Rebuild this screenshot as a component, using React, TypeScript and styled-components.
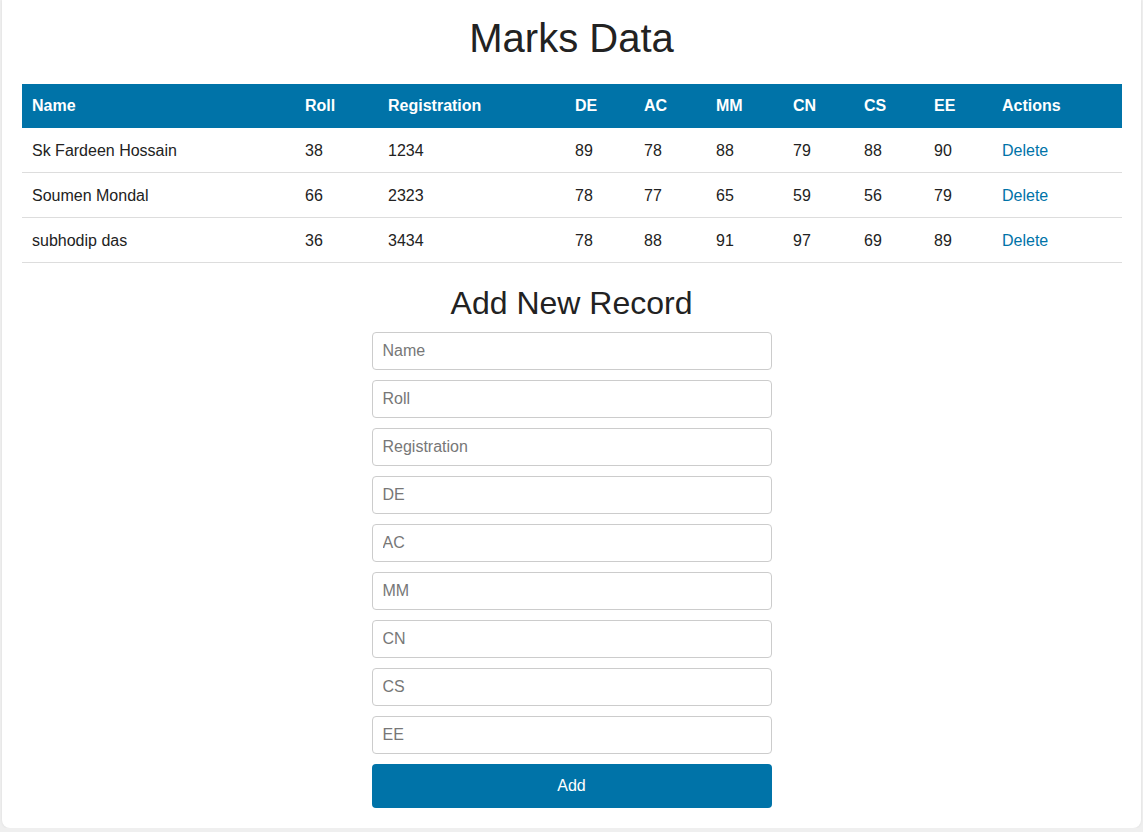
import React, { useState } from "react";
import styled, { createGlobalStyle } from "styled-components";

const GlobalStyle = createGlobalStyle`
  html, body {
    margin: 0;
    padding: 0;
    background: #efefef;
    font-family: "Liberation Sans", Arial, sans-serif;
    color: #222;
  }
`;

const Card = styled.div`
  margin: 0 2px;
  padding: 15px 20px 20px;
  background: #fff;
  border-radius: 0 0 8px 8px;
  box-shadow: 0 0 3px rgba(0, 0, 0, 0.08);
`;

const Title = styled.h1`
  margin: 0 0 23px;
  font-size: 40px;
  line-height: 46px;
  font-weight: normal;
  text-align: center;
  color: #222;
`;

const Table = styled.table`
  width: 100%;
  border-collapse: collapse;
  table-layout: fixed;
  font-size: 16px;
`;

const HeadCell = styled.th<{ $w: number }>`
  box-sizing: border-box;
  width: ${(p) => p.$w}px;
  padding: 12px 10px;
  line-height: 20px;
  background: #0073a8;
  color: #fff;
  font-weight: bold;
  text-align: left;
`;

const Cell = styled.td`
  padding: 13px 10px 11px;
  line-height: 20px;
  border-bottom: 1px solid #ddd;
  color: #222;
`;

const DeleteLink = styled.a`
  color: #0073a8;
  text-decoration: none;
  cursor: pointer;
`;

const SubTitle = styled.h2`
  margin: 22px 0 10px;
  font-size: 32px;
  line-height: 37px;
  font-weight: normal;
  text-align: center;
  color: #222;
`;

const Form = styled.form`
  width: 400px;
  margin: 0 auto;
  display: flex;
  flex-direction: column;
  gap: 10px;
`;

const Input = styled.input`
  box-sizing: border-box;
  height: 38px;
  padding: 0 10px;
  border: 1px solid #ccc;
  border-radius: 4px;
  font-family: inherit;
  font-size: 16px;
  color: #222;
  outline: none;

  &::placeholder {
    color: #777;
  }
`;

const Button = styled.button`
  height: 44px;
  border: none;
  border-radius: 4px;
  background: #0073a8;
  color: #fff;
  font-family: inherit;
  font-size: 16px;
  cursor: pointer;
`;

type Row = {
  name: string;
  roll: number;
  registration: number;
  DE: number;
  AC: number;
  MM: number;
  CN: number;
  CS: number;
  EE: number;
};

const columns: [string, number][] = [
  ["Name", 273],
  ["Roll", 83],
  ["Registration", 187],
  ["DE", 69],
  ["AC", 72],
  ["MM", 77],
  ["CN", 71],
  ["CS", 70],
  ["EE", 68],
  ["Actions", 130],
];

const fields = ["Name", "Roll", "Registration", "DE", "AC", "MM", "CN", "CS", "EE"];

const initialRows: Row[] = [
  { name: "Sk Fardeen Hossain", roll: 38, registration: 1234, DE: 89, AC: 78, MM: 88, CN: 79, CS: 88, EE: 90 },
  { name: "Soumen Mondal", roll: 66, registration: 2323, DE: 78, AC: 77, MM: 65, CN: 59, CS: 56, EE: 79 },
  { name: "subhodip das", roll: 36, registration: 3434, DE: 78, AC: 88, MM: 91, CN: 97, CS: 69, EE: 89 },
];

export default function App() {
  const [rows, setRows] = useState<Row[]>(initialRows);

  return (
    <>
      <GlobalStyle />
      <Card>
        <Title>Marks Data</Title>
        <Table>
          <thead>
            <tr>
              {columns.map(([label, w]) => (
                <HeadCell key={label} $w={w}>
                  {label}
                </HeadCell>
              ))}
            </tr>
          </thead>
          <tbody>
            {rows.map((r, idx) => (
              <tr key={r.registration}>
                <Cell>{r.name}</Cell>
                <Cell>{r.roll}</Cell>
                <Cell>{r.registration}</Cell>
                <Cell>{r.DE}</Cell>
                <Cell>{r.AC}</Cell>
                <Cell>{r.MM}</Cell>
                <Cell>{r.CN}</Cell>
                <Cell>{r.CS}</Cell>
                <Cell>{r.EE}</Cell>
                <Cell>
                  <DeleteLink onClick={() => setRows(rows.filter((_, i) => i !== idx))}>
                    Delete
                  </DeleteLink>
                </Cell>
              </tr>
            ))}
          </tbody>
        </Table>
        <SubTitle>Add New Record</SubTitle>
        <Form onSubmit={(e) => e.preventDefault()}>
          {fields.map((f) => (
            <Input key={f} placeholder={f} />
          ))}
          <Button type="submit">Add</Button>
        </Form>
      </Card>
    </>
  );
}
